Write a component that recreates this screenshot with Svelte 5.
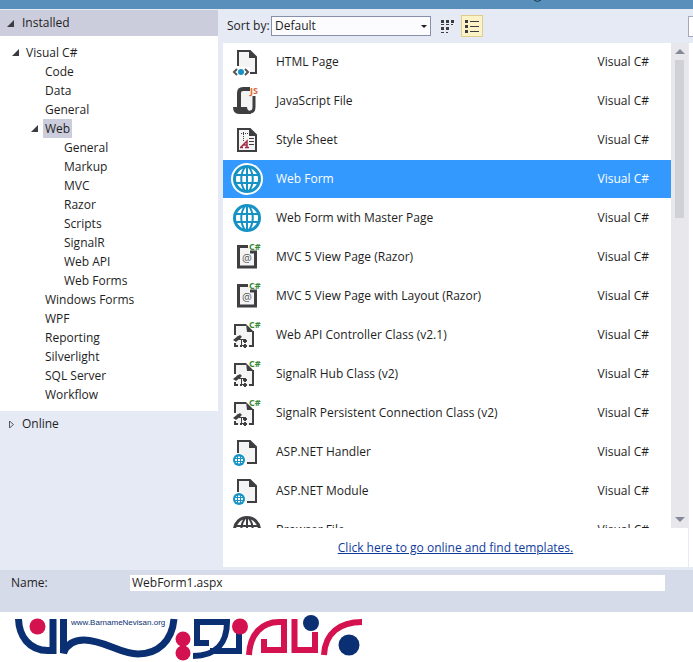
<script lang="ts">
	interface TreeNode {
		label: string;
		level: number;
		open?: boolean;
	}

	interface Template {
		name: string;
		icon: string;
	}

	const tree: TreeNode[] = [
		{ label: 'Visual C#', level: 0, open: true },
		{ label: 'Code', level: 1 },
		{ label: 'Data', level: 1 },
		{ label: 'General', level: 1 },
		{ label: 'Web', level: 1, open: true },
		{ label: 'General', level: 2 },
		{ label: 'Markup', level: 2 },
		{ label: 'MVC', level: 2 },
		{ label: 'Razor', level: 2 },
		{ label: 'Scripts', level: 2 },
		{ label: 'SignalR', level: 2 },
		{ label: 'Web API', level: 2 },
		{ label: 'Web Forms', level: 2 },
		{ label: 'Windows Forms', level: 1 },
		{ label: 'WPF', level: 1 },
		{ label: 'Reporting', level: 1 },
		{ label: 'Silverlight', level: 1 },
		{ label: 'SQL Server', level: 1 },
		{ label: 'Workflow', level: 1 }
	];

	const templates: Template[] = [
		{ name: 'HTML Page', icon: 'html' },
		{ name: 'JavaScript File', icon: 'js' },
		{ name: 'Style Sheet', icon: 'css' },
		{ name: 'Web Form', icon: 'globe' },
		{ name: 'Web Form with Master Page', icon: 'globe' },
		{ name: 'MVC 5 View Page (Razor)', icon: 'razor' },
		{ name: 'MVC 5 View Page with Layout (Razor)', icon: 'razor' },
		{ name: 'Web API Controller Class (v2.1)', icon: 'class' },
		{ name: 'SignalR Hub Class (v2)', icon: 'class' },
		{ name: 'SignalR Persistent Connection Class (v2)', icon: 'class' },
		{ name: 'ASP.NET Handler', icon: 'handler' },
		{ name: 'ASP.NET Module', icon: 'handler' },
		{ name: 'Browser File', icon: 'browser' }
	];

	let node = $state(4);
	let selected = $state(3);
	let fileName = $state('WebForm1.aspx');
</script>

{#snippet globe(color: string)}
	<circle cx="16" cy="16" r="14" fill={color} />
	<circle cx="16" cy="16" r="11" fill="#fff" />
	<g fill="none" stroke={color} stroke-width="2">
		<path d="M5 12h22M5 20h22M16 4v24" />
		<path d="M14 4c-5 7-5 17 0 24M18 4c5 7 5 17 0 24" />
	</g>
{/snippet}

{#snippet page()}
	<path d="M8 5h11l6 6v16H8z" fill="#f4f4f5" />
	<path d="M18 4l8 8h-8z" fill="#3f3f42" />
{/snippet}

{#snippet icon(kind: string, active: boolean)}
	<svg class="icon" viewBox="0 0 32 32" aria-hidden="true">
		{#if kind === 'html'}
			{@render page()}
			<path d="M7 20V5h12l6 6v16h-6" fill="none" stroke="#3f3f42" stroke-width="2" />
			<path d="M1 21h18v9H1z" fill="#fff" />
			<path d="M25 20v7h-6" fill="none" stroke="#3f3f42" stroke-width="2" />
			<path d="M6 23l-3 3 3 3M14 23l3 3-3 3" fill="none" stroke="#55555a" stroke-width="2" />
			<circle cx="10" cy="26" r="3" fill="#1792c4" />
		{:else if kind === 'js'}
			<path d="M9 4h13v20l-3 3H9z" fill="#f4f4f5" />
			<path d="M19 4h-7q-4 0-4 4v15" fill="none" stroke="#3f3f42" stroke-width="4" />
			<path d="M23 11v11q0 5-4 5" fill="none" stroke="#3f3f42" stroke-width="3" />
			<path d="M2 22h14q0 4 4 4v3H8q-6 0-6-7z" fill="#3f3f42" />
			<text x="19" y="9" class="js">JS</text>
		{:else if kind === 'css'}
			{@render page()}
			<path d="M7 5h12l6 6v16H7z" fill="none" stroke="#3f3f42" stroke-width="2" />
			<path d="M10 9.500h8M12.500 8v9" fill="none" stroke="#3f3f42" stroke-dasharray="1 1" />
			<path d="M18 14.500h5M18 17.500h5M18 20.500h5" stroke="#3f3f42" />
			<path d="M9 23.500h3M10 23l6-6v6M12 21h4M14 23.500h4" fill="none" stroke="#a52b45" stroke-width="1.500" />
		{:else if kind === 'globe'}
			{#if active}
				<circle cx="16" cy="16" r="16" fill="#fff" />
			{/if}
			{@render globe('#1792c4')}
		{:else if kind === 'razor'}
			<path d="M8 6h10v5h6v15H8z" fill="#f4f4f5" />
			<path d="M17 5.500H7.500v20.500h17V11H19" fill="none" stroke="#3f3f42" stroke-width="3" />
			<text x="11" y="21" class="at">@</text>
			<text x="18" y="9" class="cs">C#</text>
		{:else if kind === 'class'}
			<path d="M5 7h12l5 5v16H5z" fill="#f4f4f5" />
			<path d="M4 16V6h11M22 12v15h-4M4 24v3h3M9 27h2" fill="none" stroke="#3f3f42" stroke-width="2" />
			<path d="M15 5l8 8h-7z" fill="#3f3f42" />
			<path d="M2 21l5-4 3 2-5 4z" fill="#3f3f42" />
			<path d="M6 18l3-2 2 2-3 2z" fill="#3f3f42" />
			<path d="M12 22l2-2 2 2-2 2zM12 27l2-2 2 2-2 2z" fill="#3f3f42" stroke="#3f3f42" />
			<path d="M8 20.500h5M10.500 20v6.500h3" fill="none" stroke="#3f3f42" />
			<text x="18" y="9" class="cs">C#</text>
		{:else if kind === 'handler'}
			{@render page()}
			<path d="M7 17V5h12l6 6v16h-9" fill="none" stroke="#3f3f42" stroke-width="2" />
			<circle cx="8" cy="24" r="7" fill="#fff" />
			<circle cx="8" cy="24" r="6" fill="#1792c4" />
			<ellipse cx="8" cy="24" rx="4" ry="3.500" fill="#fff" />
			<path d="M3 22.500h10M3 25.500h10M6.500 20v8M9.500 20v8" stroke="#1792c4" />
		{:else}
			{@render globe('#3f3f42')}
		{/if}
	</svg>
{/snippet}

<div class="screen">
	<header class="titlebar">
		<svg viewBox="0 0 8 3" aria-hidden="true"><path d="M0 0q3 3 7 0" fill="none" stroke="#17384f" /></svg>
	</header>

	<main class="dialog">
		<nav class="side">
			<button class="group installed">
				<svg class="arrow" viewBox="0 0 7 7" aria-hidden="true"><path d="M7 0v7H0z" fill="#3b3b40" /></svg>
				Installed
			</button>
			<ul class="tree">
				{#each tree as item, i}
					<li class="level-{item.level}">
						{#if item.open}
							<svg class="arrow" viewBox="0 0 7 7" aria-hidden="true"><path d="M7 0v7H0z" fill="#3b3b40" /></svg>
						{/if}
						<button class:current={node === i} onclick={() => (node = i)}>{item.label}</button>
					</li>
				{/each}
			</ul>
			<button class="group">
				<svg class="arrow" viewBox="0 0 7 7" aria-hidden="true">
					<path d="M2.500 0v7l4-3.500z" fill="none" stroke="#55555a" />
				</svg>
				Online
			</button>
		</nav>

		<section class="content">
			<div class="toolbar">
				<label for="sort">Sort by:</label>
				<div class="select">
					<select id="sort">
						<option>Default</option>
					</select>
					<svg viewBox="0 0 6 3" aria-hidden="true"><path d="M0 0h6L3 3z" fill="#1e1e1e" /></svg>
				</div>
				<button class="view" aria-label="Medium icons">
					<svg viewBox="0 0 16 16" aria-hidden="true">
						<path
							d="M2 2h3v3H2zM7 2h3v3H7zM12 2h3v3h-3zM2 9h3v3H2zM7 9h3v3H7z"
							fill="#3b3b40"
						/>
						<path d="M2 6.500h3M7 6.500h3M12 6.500h2M2 14.500h3M7 14.500h2" stroke="#3b3b40" />
					</svg>
				</button>
				<button class="view on" aria-label="Small icons">
					<svg viewBox="0 0 16 16" aria-hidden="true">
						<path d="M1 2h3v3H1zM1 7h3v3H1zM1 12h3v3H1z" fill="#3b3b40" />
						<path d="M6 3.500h9M6 8.500h9M6 13.500h9" stroke="#3b3b40" />
					</svg>
				</button>
				<input class="search" type="search" aria-label="Search installed templates" />
			</div>

			<div class="body">
				<div class="center">
					<div class="list-wrap">
						<ul class="list">
							{#each templates as template, i}
								<li>
									<button class="row" class:selected={selected === i} onclick={() => (selected = i)}>
										{@render icon(template.icon, selected === i)}
										<span class="name">{template.name}</span>
										<span class="lang">Visual C#</span>
									</button>
								</li>
							{/each}
						</ul>
						<div class="scrollbar">
							<svg viewBox="0 0 10 5" aria-hidden="true"><path d="M0 5l5-5 5 5z" fill="#868999" /></svg>
							<div class="track"><div class="thumb"></div></div>
							<svg viewBox="0 0 10 5" aria-hidden="true"><path d="M0 0l5 5 5-5z" fill="#868999" /></svg>
						</div>
					</div>
					<p class="online"><a href="#online">Click here to go online and find templates.</a></p>
				</div>
				<aside class="details"></aside>
			</div>
		</section>
	</main>

	<div class="namebar">
		<label for="file-name">Name:</label>
		<input id="file-name" type="text" bind:value={fileName} />
	</div>

	<footer class="brand">
		<svg viewBox="0 0 370 50" role="img" aria-label="Barname Nevisan">
			<g fill="none" stroke="#0b2f73" stroke-width="7">
				<path d="M18.500 7C19 24 29 38.500 48 38.500h5V7" />
				<path d="M63.500 7v34C67 32 74 28 84 28c20 0 36 14 54 14 20 0 34-13 36-35" />
				<path d="M209 31h-12V10h30c0 20-10 34-34 34M210 39h29V21" stroke-width="6" />
			</g>
			<g fill="none" stroke="#d3124f" stroke-width="6">
				<path d="M249 43c1-21 13-33 30-33h5v28h-20V27" />
				<path d="M294.500 7v31H315V20" />
				<path d="M324 43c1-22 16-33 38-33" />
			</g>
			<g fill="#d3124f">
				<circle cx="37.500" cy="14.500" r="8" />
				<circle cx="183" cy="27" r="7.500" />
				<circle cx="183" cy="41" r="7.500" />
				<circle cx="240" cy="14.500" r="8" />
			</g>
			<g fill="#0b2f73">
				<circle cx="311" cy="11" r="8" />
				<circle cx="349" cy="33" r="10.500" />
			</g>
			<text x="71" y="13" class="url">www.BarnameNevisan.org</text>
		</svg>
	</footer>
</div>

<style>
	:global(body) {
		margin: 0;
		background: #fff;
	}
	.screen {
		display: flex;
		flex-direction: column;
		height: 100vh;
		overflow: hidden;
		font-family: 'Open Sans', 'Noto Sans', sans-serif;
		font-size: 12px;
		line-height: 18px;
		color: #1e1e1e;
	}
	button,
	input,
	select {
		box-sizing: border-box;
		margin: 0;
		padding: 0;
		border: 0;
		border-radius: 0;
		background: none;
		font: inherit;
		color: inherit;
		outline: none;
	}
	ul {
		margin: 0;
		padding: 0;
		list-style: none;
	}
	svg {
		display: block;
		flex: none;
	}

	.titlebar {
		flex: none;
		height: 9px;
		padding-left: 77%;
		background: #598fbb;
	}
	.titlebar svg {
		width: 8px;
		height: 3px;
	}
	.dialog {
		flex: 1;
		min-height: 0;
		display: flex;
		gap: 5px;
		padding-bottom: 3px;
		background: #e6eaf5;
	}

	/* categories */
	.side {
		flex: none;
		width: 218px;
		padding-top: 1px;
	}
	.group {
		display: flex;
		align-items: center;
		gap: 3px;
		width: 100%;
		height: 26px;
		padding-left: 7px;
		text-align: left;
	}
	.installed {
		background: #cccddc;
	}
	.arrow {
		width: 7px;
		height: 7px;
		margin-right: 5px;
	}
	.tree {
		padding: 7px 0;
		background: #fff;
	}
	.tree li {
		display: flex;
		align-items: center;
		height: 19px;
	}
	.tree button {
		height: 19px;
		padding: 0 2px;
	}
	.tree .current {
		background: #cccddc;
	}
	.level-0 {
		padding-left: 12px;
	}
	.level-1 {
		padding-left: 43px;
	}
	.level-1:has(.arrow) {
		padding-left: 31px;
	}
	.level-2 {
		padding-left: 62px;
	}

	/* toolbar */
	.content {
		flex: 1;
		min-width: 0;
		display: flex;
		flex-direction: column;
	}
	.toolbar {
		flex: none;
		display: flex;
		align-items: center;
		height: 34px;
		padding-left: 4px;
	}
	.toolbar label {
		width: 44px;
		white-space: nowrap;
	}
	.select {
		display: flex;
		align-items: center;
		width: 160px;
		margin-right: 5px;
	}
	.select select {
		width: 100%;
		height: 20px;
		padding: 0 3px;
		appearance: none;
		border: 1px solid #8790a8;
		background: #fcfcfe;
	}
	.select svg {
		width: 6px;
		height: 3px;
		margin-left: -10px;
		margin-right: 4px;
		pointer-events: none;
	}
	.view {
		display: flex;
		align-items: center;
		justify-content: center;
		width: 22px;
		height: 22px;
		margin-right: 3px;
	}
	.view svg {
		width: 16px;
		height: 16px;
	}
	.view.on {
		border: 1px solid #e0cd8c;
		background: #fbf2c8;
	}
	.search {
		width: 5px;
		height: 21px;
		margin-left: auto;
		appearance: none;
		border: 1px solid #a3a9bb;
		border-right: 0;
		background: #fff;
	}

	/* templates */
	.body {
		flex: 1;
		min-height: 0;
		display: flex;
		gap: 1px;
	}
	.center {
		flex: 1;
		min-width: 0;
		display: flex;
		flex-direction: column;
		background: #fff;
	}
	.list-wrap {
		flex: 1;
		min-height: 0;
		display: flex;
	}
	.list {
		flex: 1;
		overflow: hidden;
	}
	.list li {
		height: 39px;
	}
	.row {
		display: flex;
		align-items: center;
		width: 100%;
		height: 38px;
		padding: 0 22px 0 8px;
		text-align: left;
		white-space: nowrap;
	}
	.row.selected {
		background: #3399ff;
		color: #fff;
	}
	.icon {
		width: 32px;
		height: 32px;
		margin-right: 13px;
		overflow: visible;
	}
	.name {
		flex: 1;
	}
	.js,
	.cs {
		font-size: 9px;
		font-weight: 700;
	}
	.js {
		fill: #e0672f;
	}
	.cs {
		fill: #388a34;
	}
	.at {
		font-size: 11px;
		fill: #55555a;
	}
	.scrollbar {
		flex: none;
		display: flex;
		flex-direction: column;
		align-items: center;
		gap: 6px;
		width: 17px;
		box-sizing: border-box;
		padding: 6px 0;
		background: #e8e8ec;
	}
	.scrollbar svg {
		width: 10px;
		height: 5px;
	}
	.track {
		flex: 1;
		width: 9px;
	}
	.thumb {
		height: 35%;
		background: #d0d1d7;
	}
	.online {
		flex: none;
		height: 39px;
		margin: 0;
		line-height: 39px;
		text-align: center;
	}
	.online a {
		color: #0e3a9c;
	}
	.details {
		flex: none;
		width: 4px;
		background: #fff;
	}

	/* file name */
	.namebar {
		flex: none;
		display: flex;
		align-items: flex-start;
		box-sizing: border-box;
		height: 42px;
		padding: 4px 28px 0 11px;
		background: #d6dbe9;
	}
	.namebar label {
		width: 119px;
	}
	.namebar input {
		flex: 1;
		height: 16px;
		margin-top: 1px;
		padding: 0 2px;
		background: #fff;
	}

	.brand {
		flex: none;
		height: 50px;
	}
	.brand svg {
		width: 370px;
		height: 50px;
	}
	.url {
		font-family: 'Liberation Sans', sans-serif;
		font-size: 8px;
		fill: #0b2f73;
	}
</style>
